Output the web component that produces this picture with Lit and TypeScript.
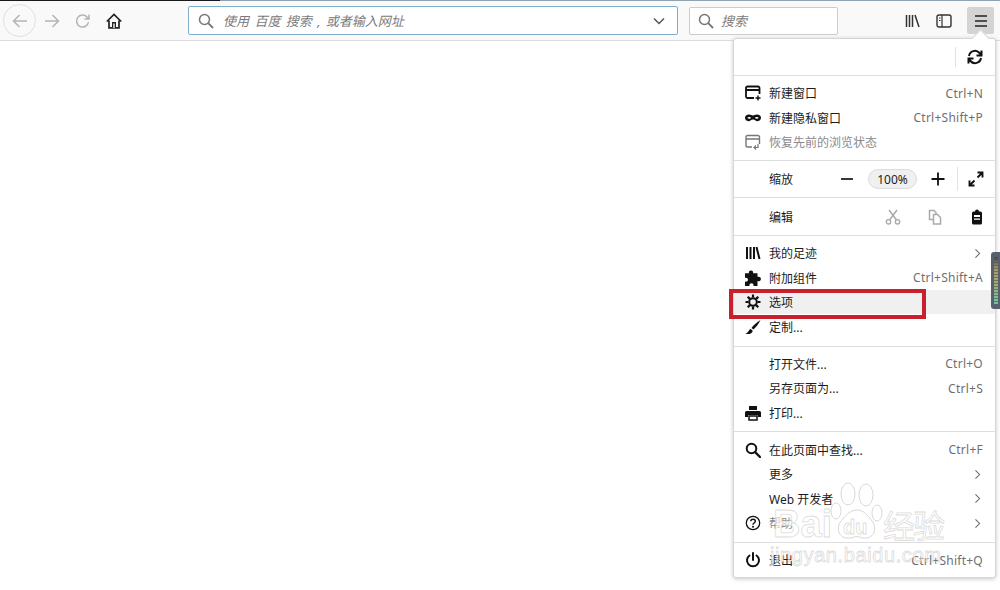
import { LitElement, html, css, svg } from "lit";
import { customElement } from "lit/decorators.js";

const ic = (body: unknown, cls = "") => html`<svg class="ic ${cls}" viewBox="0 0 16 16">${body}</svg>`;

const icons = {
  newWin: svg`<path d="M14.500 9V3a1.500 1.500 0 0 0-1.500-1.500H2.500A1.500 1.500 0 0 0 1 3v8.500A1.500 1.500 0 0 0 2.500 13H9M1 5h13.500" fill="none" stroke="#111" stroke-width="1.800"/><path d="M13 10.500v5M10.500 13h5" stroke="#111" stroke-width="1.400"/>`,
  mask: svg`<path d="M4 4.500c2 0 3 1 4 1s2-1 4-1c2.500 0 4 1.500 4 3.300s-1.500 3.400-3.500 3.400c-2 0-2.500-1.700-4.500-1.700s-2.500 1.700-4.500 1.700C1.500 11.200 0 9.600 0 7.800s1.500-3.300 4-3.300z" fill="#111"/><ellipse cx="4.200" cy="7.800" rx="1.700" ry=".9" fill="#fff"/><ellipse cx="11.800" cy="7.800" rx="1.700" ry=".9" fill="#fff"/>`,
  restore: svg`<path d="M14.500 10V3A1.500 1.500 0 0 0 13 1.500H2.500A1.500 1.500 0 0 0 1 3v8.500A1.500 1.500 0 0 0 2.500 13H7M1 5h13.500" fill="none" stroke="#777" stroke-width="1.400"/><path d="M13 10v3.500H9M11 11.500l-2 2 2 2" fill="none" stroke="#777" stroke-width="1.200"/>`,
  library: svg`<path d="M2 2v12M5.500 2v12M9 2v12M11.500 2l3 12" stroke="#111" stroke-width="2" fill="none"/>`,
  puzzle: svg`<path d="M6 .5c1.600 0 2.400 1.100 2.100 2.700h4.400v3.600c1.600-.5 3.400.3 3.400 2.100s-1.800 2.700-3.400 2.200V16H8.500c.4-1.800-.5-2.800-2-2.800s-2.400 1.100-2 2.800H0v-4.400c1.500.3 3-.4 3-1.900S1.500 7.400 0 7.800V3.200h3.900C3.600 1.600 4.400.5 6 .5z" fill="#111"/>`,
  gear: svg`<circle cx="8" cy="8" r="3.800" fill="none" stroke="#111" stroke-width="2"/><path d="M8 .5v3M8 12.500v3M.5 8h3M12.500 8h3M2.700 2.700l2.200 2.200M11.100 11.100l2.200 2.200M2.700 13.300l2.200-2.200M11.100 4.900l2.200-2.200" stroke="#111" stroke-width="2.200"/>`,
  brush: svg`<path d="M15.500 1C12 3 8.500 6 6.500 9l2 1.500C11 8 14 4.500 15.500 1z" fill="#111"/><path d="M5.700 10C3.500 10.500 4 13.500.5 14.500c3 1.200 6.500.5 7.300-2.800z" fill="#111"/>`,
  printer: svg`<path d="M4 1h8v4H4zM1.500 6h13A1.500 1.500 0 0 1 16 7.500V12h-3v-2H3v2H0V7.500A1.500 1.500 0 0 1 1.500 6z" fill="#111"/><path d="M4 11h8v4H4z" fill="#fff" stroke="#111" stroke-width="1.500"/>`,
  find: svg`<circle cx="6.500" cy="6.500" r="4.800" fill="none" stroke="#111" stroke-width="2"/><path d="M10 10l5 5" stroke="#111" stroke-width="2.400" stroke-linecap="round"/>`,
  help: svg`<circle cx="8" cy="8" r="6.700" fill="none" stroke="#111" stroke-width="1.300"/><path d="M5.800 6.300C5.800 5 6.800 4.300 8 4.300s2.300.7 2.300 2c0 1.800-2.300 1.700-2.300 3.400" fill="none" stroke="#111" stroke-width="1.400"/><circle cx="8" cy="11.700" r="1" fill="#111"/>`,
  power: svg`<path d="M8 1v7" stroke="#111" stroke-width="2" stroke-linecap="round"/><path d="M4.500 3.500a6 6 0 1 0 7 0" fill="none" stroke="#111" stroke-width="2" stroke-linecap="round"/>`,
  chevron: svg`<path d="M5.500 3l5 5-5 5" fill="none" stroke="#666" stroke-width="1.300"/>`,
  sync: svg`<path d="M2 7a6 6 0 0 1 10.500-3L14.500 6M14.500 1.500V6.500H9.500" fill="none" stroke="#111" stroke-width="2"/><path d="M14 9a6 6 0 0 1-10.500 3L1.500 10M1.500 14.500V9.500H6.500" fill="none" stroke="#111" stroke-width="2"/>`,
  minus: svg`<path d="M2 8h12" stroke="#222" stroke-width="1.800"/>`,
  plus: svg`<path d="M1.500 8h13M8 1.500v13" stroke="#111" stroke-width="1.800"/>`,
  expand: svg`<path d="M9.500 1.500h5v5M14 2L9.500 6.500M6.500 14.500h-5v-5M2 14l4.500-4.500" fill="none" stroke="#111" stroke-width="1.900"/>`,
  cut: svg`<path d="M4 1l7.500 10M12 1L4.500 11" stroke="#aaa" stroke-width="1.500"/><circle cx="3.500" cy="12.800" r="2.200" fill="none" stroke="#aaa" stroke-width="1.400"/><circle cx="12.500" cy="12.800" r="2.200" fill="none" stroke="#aaa" stroke-width="1.400"/>`,
  copy: svg`<path d="M6 10.500H2.500V1.500H7l2 2v2M6.500 5.500h4l3 3v6.500h-7z" fill="none" stroke="#aaa" stroke-width="1.500"/>`,
  paste: svg`<path d="M6 2.500a2 2 0 0 1 4 0h1.500A1.500 1.500 0 0 1 13 4v10a1.500 1.500 0 0 1-1.500 1.500h-7A1.500 1.500 0 0 1 3 14V4a1.500 1.500 0 0 1 1.500-1.500z" fill="#111"/><path d="M5 6h6v2H5zM5 9.500h6v1.300H5z" fill="#fff"/>`,
};

type Item = { icon?: keyof typeof icons; label: string; key?: string; arrow?: boolean; muted?: boolean; hover?: boolean };

const sec1: Item[] = [
  { icon: "newWin", label: "新建窗口", key: "Ctrl+N" },
  { icon: "mask", label: "新建隐私窗口", key: "Ctrl+Shift+P" },
  { icon: "restore", label: "恢复先前的浏览状态", muted: true },
];
const sec2: Item[] = [
  { icon: "library", label: "我的足迹", arrow: true },
  { icon: "puzzle", label: "附加组件", key: "Ctrl+Shift+A" },
  { icon: "gear", label: "选项", hover: true },
  { icon: "brush", label: "定制..." },
];
const sec3: Item[] = [
  { label: "打开文件...", key: "Ctrl+O" },
  { label: "另存页面为...", key: "Ctrl+S" },
  { icon: "printer", label: "打印..." },
];
const sec4: Item[] = [
  { icon: "find", label: "在此页面中查找...", key: "Ctrl+F" },
  { label: "更多", arrow: true },
  { label: "Web 开发者", arrow: true },
  { icon: "help", label: "帮助", arrow: true, muted: true },
];

@customElement("app-root")
export class AppRoot extends LitElement {
  static styles = css`
    :host {
      display: block;
      position: relative;
      width: 1000px;
      height: 590px;
      overflow: hidden;
      background: #fff;
      font-family: "Noto Sans", "Noto Sans CJK SC", sans-serif;
      font-size: 12px;
      color: #1c1c1c;
    }
    .topline { display: flex; height: 1px; }
    .topline .a { width: 220px; background: #1a1a1e; }
    .topline .b { flex: 1; background: #8fa3b3; }
    .toolbar {
      display: flex;
      align-items: center;
      height: 40px;
      background: #f9f9fa;
      border-bottom: 1px solid #dcdcdc;
      box-sizing: border-box;
      padding-left: 3px;
    }
    .ic { width: 16px; height: 16px; display: block; flex: none; }
    .back {
      width: 33px; height: 33px; border-radius: 50%;
      border: 1px solid #e0e0e0; box-sizing: border-box;
      display: flex; align-items: center; justify-content: center;
    }
    .tb { width: 16px; display: flex; justify-content: center; }
    .fwd { margin-left: 8px; }
    .rel { margin-left: 15px; }
    .home { margin-left: 15px; }
    .urlbar {
      margin-left: 66px; width: 490px; height: 29px; box-sizing: border-box;
      background: #fff; border: 1px solid #7fafc6; border-radius: 2px;
      display: flex; align-items: center; padding: 0 10px 0 9px; gap: 9px;
      color: #7a7a7a; font-style: italic; font-size: 13px; word-spacing: 2px;
    }
    .urlbar span, .search span { flex: 1; }
    .search {
      margin-left: 11px; width: 149px; height: 28px; box-sizing: border-box;
      background: #fff; border: 1px solid #ccc; border-radius: 2px;
      display: flex; align-items: center; padding: 0 8px; gap: 7px;
      color: #7a7a7a; font-style: italic; font-size: 13px;
    }
    .lib { margin-left: 67px; }
    .side { margin-left: 15px; }
    .burger {
      margin-left: 15px; width: 27px; height: 27px; border-radius: 2px;
      background: #d4d4d5; display: flex; align-items: center; justify-content: center;
    }
    .page { height: 549px; }

    .menu {
      position: absolute; left: 733px; top: 38px; width: 263px; height: 540px;
      box-sizing: border-box; background: #fff;
      border: 1px solid #d6d6d6; border-radius: 3px;
      box-shadow: 0 1px 4px rgba(0, 0, 0, 0.22);
      display: flex; flex-direction: column;
    }
    .notch {
      position: absolute; left: 240px; top: -7px; width: 12px; height: 12px;
      background: #fff; transform: rotate(45deg);
      border-left: 1px solid #d6d6d6; border-top: 1px solid #d6d6d6;
    }
    .top {
      height: 36px; display: flex; align-items: center; justify-content: flex-end;
      position: relative;
    }
    .top .ic { margin: 0 12px 0 11px; }
    .vsep { width: 1px; background: #e2e2e2; height: 20px; flex: none; }
    .sec { border-top: 1px solid #dedede; flex: none; }
    .s1 { padding: 5px 0 5.5px; }
    .s2 { padding: 4.750px 0 7.250px; }
    .s3 { padding: 4.500px 0 6px; }
    .s4 { padding: 5.500px 0 6px; }
    .s5 { padding: 5.500px 0 0; }
    .row {
      height: 24.500px; display: flex; align-items: center;
      padding: 0 12px 0 11px; box-sizing: border-box;
    }
    .row.hover { background: #f0f0f0; }
    .row .ic { margin-right: 8px; }
    .row .ph { width: 16px; margin-right: 8px; flex: none; }
    .row .label { flex: 1; white-space: nowrap; }
    .row .key { color: #6f6f6f; white-space: nowrap; letter-spacing: 0.25px; }
    .row .chev { margin: 0 -1px 0 0; width: 13px; height: 13px; }
    .muted { color: #8a8a8a; }
    .zoomrow {
      height: 36px; display: flex; align-items: center;
      padding-left: 35px;
    }
    .zoomrow .label { width: 70px; }
    .zoomrow .pill {
      width: 49px; height: 20px; border-radius: 10px; box-sizing: border-box;
      background: #f0f0f0; border: 1px solid #dcdcdc;
      display: flex; align-items: center; justify-content: center; margin: 0 13px 0 13px;
    }
    .zoomrow .vsep { margin: 0 10px 0 11px; height: 24px; }
    .editrow {
      height: 37px; display: flex; align-items: center; padding-left: 35px;
    }
    .editrow .label { width: 116px; }
    .editrow .ic + .ic { margin-left: 26px; }

    .redbox {
      position: absolute; left: 729px; top: 289px; width: 197px; height: 30px;
      box-sizing: border-box; border: 4px solid #c9202d;
    }
    .wm { position: absolute; left: 767px; top: 478px; width: 200px; height: 100px; pointer-events: none; }
    .wm div {
      position: absolute; white-space: nowrap;
      color: rgba(255, 255, 255, 0.6);
      -webkit-text-stroke: 0.8px rgba(190, 190, 190, 0.55);
    }
    .wm .baidu { left: 6px; top: 25px; font: 38px/1.15 "Liberation Sans", sans-serif; font-weight: bold; }
    .wm .du { left: 76px; top: 38px; font: 20px/1.15 "Liberation Sans", sans-serif; font-weight: bold; }
    .wm .jy { left: 116px; top: 26px; font: 32px/40px "Noto Sans CJK SC", sans-serif; letter-spacing: -2px; }
    .wm .url { left: 3px; top: 66px; font: 20px/1.15 "Liberation Sans", sans-serif; letter-spacing: 0.6px; }
    .wm svg { position: absolute; left: 62px; top: 3px; width: 54px; height: 62px; }

    .grip {
      position: absolute; left: 991px; top: 252px; width: 12px; height: 57px;
      background: #56616b; border-radius: 3px;
      padding: 5px 0 0 3px; box-sizing: border-box;
    }
    .grip i {
      display: block; width: 4px; height: 47px;
      background:
        repeating-linear-gradient(transparent 0 2px, rgba(70, 80, 90, 0.6) 2px 3px),
        linear-gradient(#3d4a55 0, #a89a66 25%, #a8a86e 55%, #70c2a8 100%);
    }
  `;

  private row(i: Item) {
    return html`<div class="row ${i.hover ? "hover" : ""}">
      ${i.icon ? ic(icons[i.icon]) : html`<span class="ph"></span>`}
      <span class="label ${i.muted ? "muted" : ""}">${i.label}</span>
      ${i.key ? html`<span class="key">${i.key}</span>` : ""}
      ${i.arrow ? ic(icons.chevron, "chev") : ""}
    </div>`;
  }

  render() {
    const g = "#b4b4b6";
    return html`
      <div class="topline"><div class="a"></div><div class="b"></div></div>
      <div class="toolbar">
        <div class="back">${ic(svg`<path d="M15 8H1.500M7.500 2L1.500 8l6 6" fill="none" stroke="${g}" stroke-width="1.500"/>`)}</div>
        <div class="tb fwd">${ic(svg`<path d="M1 8h13.500M8.500 2l6 6-6 6" fill="none" stroke="${g}" stroke-width="1.500"/>`)}</div>
        <div class="tb rel">${ic(svg`<path d="M13.500 9A6 6 0 1 1 12 4l2 2M14 1.500V6H9.500" fill="none" stroke="${g}" stroke-width="1.500"/>`)}</div>
        <div class="tb home">${ic(svg`<path d="M.8 8.500L8 1.500l7.200 7M3 7.500V14.800h10V7.500" fill="none" stroke="#222" stroke-width="1.700"/><path d="M6 9h4v6H6z" fill="#222"/><path d="M7.300 10.500h1.400V15H7.300z" fill="#f9f9fa"/>`)}</div>
        <div class="urlbar">
          ${ic(svg`<circle cx="6.500" cy="6.500" r="5" fill="none" stroke="#777" stroke-width="1.500"/><path d="M10.200 10.200L15 15" stroke="#777" stroke-width="1.800"/>`)}
          <span>使用 百度 搜索 , 或者输入网址</span>
          ${ic(svg`<path d="M3 5.500l5 5 5-5" fill="none" stroke="#555" stroke-width="1.500"/>`)}
        </div>
        <div class="search">
          ${ic(svg`<circle cx="6.500" cy="6.500" r="5" fill="none" stroke="#777" stroke-width="1.500"/><path d="M10.200 10.200L15 15" stroke="#777" stroke-width="1.800"/>`)}
          <span>搜索</span>
        </div>
        <div class="tb lib">${ic(svg`<path d="M1.500 2v12M4.500 2v12M7.500 2v12M10 2l4 12" stroke="#333" stroke-width="1.500" fill="none"/>`)}</div>
        <div class="tb side">${ic(svg`<rect x="1" y="2" width="14" height="12" rx="2" fill="none" stroke="#333" stroke-width="1.400"/><path d="M6 2v12M3 5h1.500M3 7.500h1.500" stroke="#333" stroke-width="1.200"/>`)}</div>
        <div class="burger">${ic(svg`<path d="M2 3h12M2 8h12M2 13h12" stroke="#222" stroke-width="1.500"/>`)}</div>
      </div>
      <div class="page"></div>

      <div class="menu">
        <div class="notch"></div>
        <div class="top"><div class="vsep"></div>${ic(icons.sync)}</div>
        <div class="sec s1">${sec1.map((i) => this.row(i))}</div>
        <div class="sec zoomrow">
          <span class="label">缩放</span>
          ${ic(icons.minus)}
          <div class="pill">100%</div>
          ${ic(icons.plus)}
          <div class="vsep"></div>
          ${ic(icons.expand)}
        </div>
        <div class="sec editrow">
          <span class="label">编辑</span>
          ${ic(icons.cut)}${ic(icons.copy)}${ic(icons.paste)}
        </div>
        <div class="sec s2">${sec2.map((i) => this.row(i))}</div>
        <div class="sec s3">${sec3.map((i) => this.row(i))}</div>
        <div class="sec s4">${sec4.map((i) => this.row(i))}</div>
        <div class="sec s5">${this.row({ icon: "power", label: "退出", key: "Ctrl+Shift+Q" })}</div>
      </div>

      <div class="redbox"></div>
      <div class="grip"><i></i></div>
      <div class="wm">
        <svg viewBox="0 0 54 62" fill="rgba(255,255,255,.5)" stroke="rgba(190,190,190,.6)" stroke-width="1">
          <ellipse cx="19" cy="13" rx="7" ry="11"/><ellipse cx="37" cy="14" rx="7" ry="11"/>
          <ellipse cx="7" cy="30" rx="5" ry="8"/><ellipse cx="48" cy="32" rx="5" ry="8"/>
          <path d="M28 29c7 0 11 6 15 11 5 6 3 18-8 17-3 0-5-1.500-7-1.500S24 57 20 57C9 58 7 46 12 40c4-5 9-11 16-11z"/>
        </svg>
        <div class="baidu">Bai</div>
        <div class="du">du</div>
        <div class="jy">经验</div>
        <div class="url">jingyan.baidu.com</div>
      </div>
    `;
  }
}
